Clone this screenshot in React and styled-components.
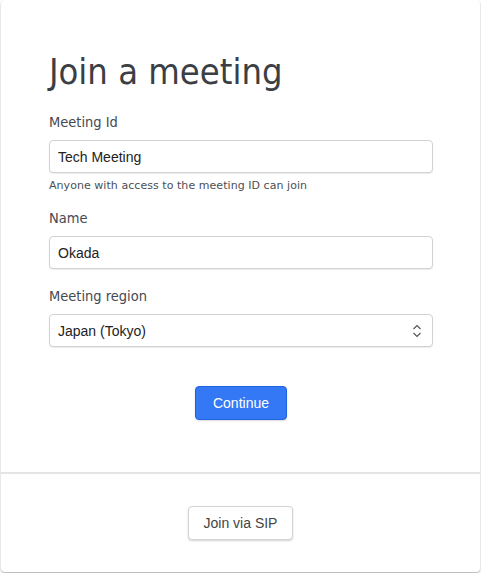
import React from "react";
import styled, { createGlobalStyle } from "styled-components";

const Global = createGlobalStyle`
  html, body { margin: 0; padding: 0; background: #fff; }
  body { font-family: "DejaVu Sans", sans-serif; }
`;

const Page = styled.div`
  padding: 0 1px 1px 1px;
`;

const Card = styled.div`
  background: #fff;
  border-radius: 4px;
  box-shadow: 0 1px 2px rgba(0, 0, 0, 0.35);
  display: flex;
  flex-direction: column;
`;

const Body = styled.form`
  padding: 50px 47px 52px 48px;
  display: flex;
  flex-direction: column;
`;

const Title = styled.h1`
  margin: 0 0 19px 0;
  font-family: "DejaVu Sans Condensed", "DejaVu Sans", sans-serif;
  font-stretch: condensed;
  font-weight: 400;
  font-size: 36px;
  line-height: 44px;
  color: #3b3f45;
`;

const Field = styled.div`
  display: flex;
  flex-direction: column;
  margin-bottom: ${(p) => p.$mb || 0}px;
`;

const Label = styled.label`
  font-family: "DejaVu Sans Condensed", "DejaVu Sans", sans-serif;
  font-stretch: condensed;
  font-size: 14.5px;
  line-height: 18px;
  color: #444a52;
  margin-bottom: 9px;
`;

const Input = styled.input`
  box-sizing: border-box;
  height: 33px;
  width: 100%;
  border: 1px solid #d2d2d2;
  border-radius: 4px;
  box-shadow: 0 1px 1px rgba(0, 0, 0, 0.08);
  padding: 0 8px;
  font-family: "Liberation Sans", Arial, sans-serif;
  font-size: 14px;
  color: #222;
  outline: none;
`;

const SelectWrap = styled.div`
  position: relative;
`;

const Select = styled.select`
  box-sizing: border-box;
  appearance: none;
  height: 33px;
  width: 100%;
  border: 1px solid #d2d2d2;
  border-radius: 4px;
  box-shadow: 0 1px 1px rgba(0, 0, 0, 0.08);
  padding: 0 8px;
  font-family: "Liberation Sans", Arial, sans-serif;
  font-size: 14px;
  color: #222;
  background: #fff;
  outline: none;
`;

const Chevrons = styled.svg`
  position: absolute;
  right: 11px;
  top: 10px;
  pointer-events: none;
`;

const Help = styled.div`
  font-family: "DejaVu Sans", sans-serif;
  font-size: 11px;
  line-height: 14px;
  letter-spacing: 0.05px;
  color: #4a4f55;
  margin-top: 6px;
`;

const Actions = styled.div`
  display: flex;
  justify-content: center;
  padding-top: ${(p) => p.$pt || 0}px;
`;

const Button = styled.button`
  box-sizing: border-box;
  height: 34px;
  padding: 0 ${(p) => (p.$primary ? 17 : 15)}px;
  border-radius: 4px;
  font-family: "Liberation Sans", Arial, sans-serif;
  font-size: 14px;
  cursor: pointer;
  border: 1px solid ${(p) => (p.$primary ? "#1f63e0" : "#d4d4d4")};
  background: ${(p) => (p.$primary ? "#3478f6" : "#fff")};
  color: ${(p) => (p.$primary ? "#fff" : "#444")};
  box-shadow: 0 1px 2px rgba(0, 0, 0, ${(p) => (p.$primary ? 0.15 : 0.18)});
`;

const Divider = styled.hr`
  margin: 0;
  border: 0;
  height: 2px;
  background: #e4e4e4;
`;

const Footer = styled.div`
  padding: 32px 0 32px;
  display: flex;
  justify-content: center;
`;

export default function App() {
  return (
    <Page>
      <Global />
      <Card>
        <Body onSubmit={(e) => e.preventDefault()}>
          <Title>Join a meeting</Title>
          <Field $mb={16}>
            <Label>Meeting Id</Label>
            <Input defaultValue="Tech Meeting" />
            <Help>Anyone with access to the meeting ID can join</Help>
          </Field>
          <Field $mb={18}>
            <Label>Name</Label>
            <Input defaultValue="Okada" />
          </Field>
          <Field>
            <Label>Meeting region</Label>
            <SelectWrap>
              <Select defaultValue="tokyo">
                <option value="tokyo">Japan (Tokyo)</option>
              </Select>
              <Chevrons width="10" height="14" viewBox="0 0 10 14">
                <path d="M1.5 5 L5 1.5 L8.5 5" fill="none" stroke="#555" strokeWidth="1.2" />
                <path d="M1.5 9 L5 12.5 L8.5 9" fill="none" stroke="#555" strokeWidth="1.2" />
              </Chevrons>
            </SelectWrap>
          </Field>
          <Actions $pt={39}>
            <Button $primary type="button">Continue</Button>
          </Actions>
        </Body>
        <Divider />
        <Footer>
          <Button type="button">Join via SIP</Button>
        </Footer>
      </Card>
    </Page>
  );
}
